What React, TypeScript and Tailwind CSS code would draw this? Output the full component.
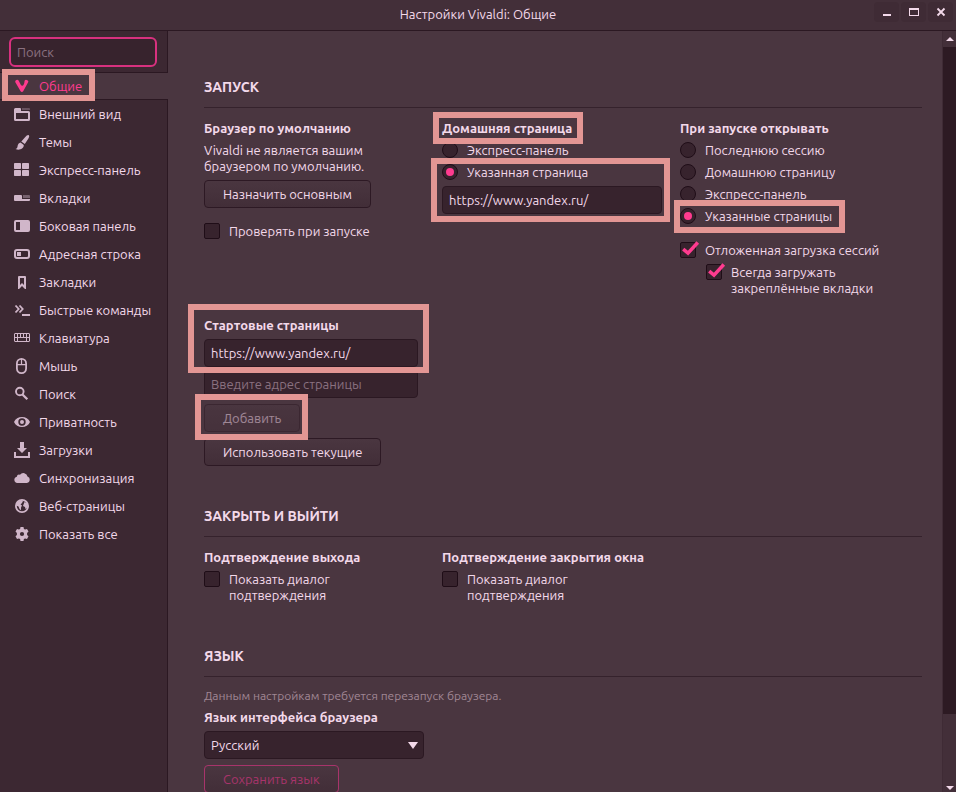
import type { ReactNode } from "react";

type NavItem = { label: string; icon: ReactNode; active?: boolean };

const NAV: NavItem[] = [
  {
    label: "Общие",
    active: true,
    icon: (
      <path d="M1.200 4A1.900 1.900 0 0 1 4.600 2.600l2.300 4.300c.6 1.100 2.200 1 2.700-.1l.6-1.500c.2-.6.2-1 .2-1.600a1.900 1.900 0 1 1 3.600.9L9.200 13.200c-.6 1.100-2 1.100-2.600 0Z" />
    ),
  },
  {
    label: "Внешний вид",
    icon: (
      <>
        <path fillRule="evenodd" d="M1.500 2H6a1 1 0 0 1 1 1v2h7.500A1.500 1.500 0 0 1 16 6.500v7a1.500 1.500 0 0 1-1.500 1.500h-13A1.500 1.500 0 0 1 0 13.500v-10A1.500 1.500 0 0 1 1.500 2ZM2 7v6h12V7Z" />
        <path opacity=".3" d="M8 2h7a1 1 0 0 1 1 1v1H8Z" />
      </>
    ),
  },
  {
    label: "Темы",
    icon: (
      <>
        <path d="M14.800 1.200c.8.700.3 2-.4 3.300L10.800 10 7.300 7.600 11.300 3c1.200-1.400 2.700-2.500 3.500-1.800Z" />
        <path d="M6.500 8.500 9.800 11c.1 2.300-1.700 4.300-4.300 4.600-1.300.1-2.800 0-4-.5 2-.6 1.800-2.100 2.200-3.700.4-1.400 1.400-2.600 2.800-2.900Z" />
      </>
    ),
  },
  {
    label: "Экспресс-панель",
    icon: (
      <>
        <rect y="1" width="7" height="6" rx=".7" />
        <rect x="8" y="1" width="7" height="6" rx=".7" />
        <rect y="8" width="7" height="6" rx=".7" />
        <rect x="8" y="8" width="7" height="6" rx=".7" />
      </>
    ),
  },
  {
    label: "Вкладки",
    icon: (
      <>
        <path d="M1 5h6a1 1 0 0 1 1 1v3h8v1a1 1 0 0 1-1 1H1a1 1 0 0 1-1-1V6a1 1 0 0 1 1-1Z" />
        <path opacity=".4" d="M9 5h6a1 1 0 0 1 1 1v2H9Z" />
      </>
    ),
  },
  {
    label: "Боковая панель",
    icon: <path fillRule="evenodd" d="M2 2h12a2 2 0 0 1 2 2v8a2 2 0 0 1-2 2H2a2 2 0 0 1-2-2V4a2 2 0 0 1 2-2Zm0 2v8h4V4Z" />,
  },
  {
    label: "Адресная строка",
    icon: (
      <>
        <rect x="1" y="4" width="14" height="8" rx="2" fill="none" stroke="currentColor" strokeWidth="2" />
        <rect x="3" y="6" width="4" height="4" />
      </>
    ),
  },
  {
    label: "Закладки",
    icon: <path fillRule="evenodd" d="M5 2h6a1 1 0 0 1 1 1v12h-1l-3-3-3 3H4V3a1 1 0 0 1 1-1Zm1 2v7l2-2 2 2V4Z" />,
  },
  {
    label: "Быстрые команды",
    icon: (
      <>
        <path fill="none" stroke="currentColor" strokeWidth="1.800" d="m1.500 3.500 3.200 3.500-3.200 3.500M5.500 3.500 8.700 7l-3.200 3.500" />
        <rect x="8" y="12" width="8" height="2" />
      </>
    ),
  },
  {
    label: "Клавиатура",
    icon: (
      <>
        <rect x=".5" y="3.500" width="15" height="8" rx=".5" fill="none" stroke="currentColor" />
        <path d="M1 7h14v1H1ZM3 4h1v3H3ZM6 4h1v3H6ZM9 4h1v3H9ZM12 4h1v3h-1ZM3 8h1v3H3ZM12 8h1v3h-1Z" />
      </>
    ),
  },
  {
    label: "Мышь",
    icon: (
      <g fill="none" stroke="currentColor" strokeWidth="1.800">
        <rect x="2.900" y=".9" width="9.200" height="14.200" rx="4.600" />
        <path strokeWidth="1.200" d="M3 6.600h9M7.500 1v5.600" />
      </g>
    ),
  },
  {
    label: "Поиск",
    icon: (
      <g fill="none" stroke="currentColor">
        <circle cx="5.800" cy="5.500" r="3.800" strokeWidth="1.900" />
        <path strokeWidth="2.300" d="m8.500 8.500 4.800 4.800" />
      </g>
    ),
  },
  {
    label: "Приватность",
    icon: (
      <path fillRule="evenodd" d="M8 3c3.600 0 6.500 1.800 8 5-1.500 3.200-4.400 5-8 5s-6.500-1.800-8-5c1.500-3.200 4.400-5 8-5Zm0 1.300a3.700 3.700 0 1 0 0 7.400 3.700 3.700 0 0 0 0-7.400Zm0 1.700a2 2 0 1 1 0 4 2 2 0 0 1 0-4Z" />
    ),
  },
  {
    label: "Загрузки",
    icon: <path d="M6 0h4v6h3L8 11 3 6h3ZM0 10h2v4h12v-4h2v6H0Z" />,
  },
  {
    label: "Синхронизация",
    icon: <path d="M3.300 13a3.200 3.200 0 0 1-.5-6.300 2.500 2.500 0 0 1 3.200-2A4.200 4.200 0 0 1 13.500 6.600 3.300 3.300 0 0 1 13 13Z" />,
  },
  {
    label: "Веб-страницы",
    icon: (
      <>
        <circle cx="8" cy="8" r="6.100" fill="none" stroke="currentColor" strokeWidth="1.800" />
        <path d="M3 4.500 7 2l2 1-1 2-1.500 1.500 1.500 1L7 9.500v2.800L5.500 11 4.500 8.500 2 7.500Z" />
        <path d="M10.500 4 13 5l1 3-1.500 2.500-1 .5-.5-2-2-1L9.500 6.500Z" />
      </>
    ),
  },
  {
    label: "Показать все",
    icon: (
      <path fillRule="evenodd" d="M6.500 1h3l.4 1.900 1.200.6 1.900-.6 1.500 2.600L13.100 7v1.900l1.400 1.400-1.500 2.600-1.900-.5-1.200.7L9.500 15h-3l-.4-1.900-1.200-.7-1.900.5-1.500-2.600L2.900 9V7L1.500 5.500 3 2.900l1.900.6 1.200-.6ZM8 5.900a2.100 2.100 0 1 0 0 4.200 2.100 2.100 0 0 0 0-4.200Z" />
    ),
  },
];

/* Marker frame drawn over the element it is placed in. */
function Marker({ className }: { className: string }) {
  return <span aria-hidden="true" className={`pointer-events-none absolute z-10 border-6 border-[#e39694] ${className}`} />;
}

function Section({ title, children }: { title: string; children: ReactNode }) {
  return (
    <section>
      <h2 className="border-b border-[#35222c] pb-3 text-sm leading-4 font-bold uppercase">{title}</h2>
      <div className="pt-3">{children}</div>
    </section>
  );
}

function Columns({ children }: { children: ReactNode }) {
  return <div className="grid grid-cols-[repeat(auto-fill,220px)] gap-x-[18px] gap-y-[18px]">{children}</div>;
}

function GroupTitle({ children }: { children: ReactNode }) {
  return <h3 className="font-bold whitespace-nowrap">{children}</h3>;
}

function Radio({ name, label, checked, marker }: { name: string; label: string; checked?: boolean; marker?: string }) {
  return (
    <label className="relative flex gap-[9px]">
      <span className="relative flex size-4 shrink-0 items-center justify-center">
        <input
          type="radio"
          name={name}
          defaultChecked={checked}
          className="peer size-4 appearance-none rounded-full border border-[#1f0d17] bg-[#37232d]"
        />
        <span className="absolute hidden size-2 rounded-full bg-[#ff3b8f] peer-checked:block" />
      </span>
      <span>{label}</span>
      {marker && <Marker className={marker} />}
    </label>
  );
}

function Check({ label, checked }: { label: string; checked?: boolean }) {
  return (
    <label className="flex gap-[9px]">
      <span className="relative size-4 shrink-0">
        <input
          type="checkbox"
          defaultChecked={checked}
          className="peer block size-4 appearance-none rounded-xs border border-[#1f0d17] bg-[#37232d]"
        />
        <svg viewBox="0 0 18 16" className="absolute -top-px left-0.5 hidden h-4 w-[18px] peer-checked:block" fill="none" stroke="#ff3b8f" strokeWidth="3.500">
          <path d="m1.200 8.200 4.800 4L15.800 1.500" />
        </svg>
      </span>
      <span>{label}</span>
    </label>
  );
}

function PushButton({ children, disabled, accent }: { children: ReactNode; disabled?: boolean; accent?: boolean }) {
  const tone = accent ? "border-[#a8346b] text-[#a8346b]" : "border-[#2d1924] text-[#f3d9ea]";
  return (
    <button
      type="button"
      disabled={disabled}
      className={`h-7 rounded border bg-linear-to-b from-[#4a3640] to-[#422e38] px-[18px] whitespace-nowrap ${tone} ${disabled ? "opacity-50" : ""}`}
    >
      {children}
    </button>
  );
}

const FIELD = "block h-7 w-full rounded border border-[#2b1822] bg-[#37232d] px-1.5 text-[#f3d9ea] placeholder:text-[#8a7180] outline-none";

function TitleBar() {
  const button = "flex h-5 w-[25px] items-center justify-center rounded bg-[#3f2b35]";
  return (
    <header className="relative flex h-[31px] shrink-0 items-center justify-center border-b border-[#2b1822] bg-[#432f39] pb-0.5">
      <h1>Настройки Vivaldi: Общие</h1>
      <div className="absolute top-0.5 right-[3px] flex gap-0.5">
        <button type="button" aria-label="Свернуть" className={button}>
          <svg viewBox="0 0 12 12" className="size-3" fill="currentColor"><path d="M2 8h8v2H2Z" /></svg>
        </button>
        <button type="button" aria-label="Развернуть" className={button}>
          <svg viewBox="0 0 12 12" className="size-3" fill="currentColor"><path fillRule="evenodd" d="M1 2h10v8H1ZM2 4v5h8V4Z" /></svg>
        </button>
        <button type="button" aria-label="Закрыть" className={button}>
          <svg viewBox="0 0 12 12" className="size-3" fill="none" stroke="currentColor" strokeWidth="1.800"><path d="m2.500 2.500 7 7M9.500 2.500l-7 7" /></svg>
        </button>
      </div>
    </header>
  );
}

function Sidebar() {
  return (
    <aside className="flex w-[168px] shrink-0 flex-col">
      <div className="border-r border-[#2b1822] bg-[#3c2832] px-[9px] pt-1.5 pb-[5px]">
        <input
          type="search"
          aria-label="Поиск"
          placeholder="Поиск"
          className="block h-[30px] w-[148px] rounded-md border-2 border-[#d8317f] bg-[#37232d] px-1.5 text-[#f3d9ea] outline-none placeholder:text-[#8a7180]"
        />
      </div>
      <nav>
        {NAV.map((item) => (
          <a
            key={item.label}
            href="#"
            className={`relative flex h-7 items-center gap-[9px] pl-3.5 whitespace-nowrap ${
              item.active ? "border-y border-[#2b1822] text-[#ff3b8f]" : "border-r border-[#2b1822] bg-[#3c2832]"
            }`}
          >
            <svg viewBox="0 0 16 16" fill="currentColor" className={`size-4 shrink-0 ${item.active ? "" : "text-[#d0b6c9]"}`}>
              {item.icon}
            </svg>
            {item.label}
            {item.active && <Marker className="-top-1 left-0.5 h-8 w-[93px]" />}
          </a>
        ))}
      </nav>
      <div className="flex-1 border-r border-[#2b1822] bg-[#3c2832]" />
    </aside>
  );
}

function ScrollBar() {
  return (
    <div aria-hidden="true" className="flex w-3.5 shrink-0 flex-col border-l border-[#3f2b35] bg-[#432f39]">
      <div className="flex h-4 items-center justify-center">
        <svg viewBox="0 0 8 4" className="h-1 w-2" fill="#f3d9ea"><path d="m0 4 4-4 4 4Z" /></svg>
      </div>
      <div className="flex-[667] bg-[#2d1a23]" />
      <div className="flex-[72]" />
      <div className="flex h-1.5 items-start justify-center">
        <svg viewBox="0 0 8 4" className="h-1 w-2" fill="#f3d9ea"><path d="m0 0 4 4 4-4Z" /></svg>
      </div>
    </div>
  );
}

export default function App() {
  return (
    <div className="flex h-screen flex-col overflow-hidden bg-[#4a3640] font-['Ubuntu','Noto_Sans',sans-serif] text-[13px] leading-4 text-[#f3d9ea]">
      <TitleBar />
      <div className="flex min-h-0 flex-1">
        <Sidebar />
        <main className="min-w-0 flex-1 overflow-hidden pt-12 pr-5 pl-9">
          <div className="flex flex-col gap-[42px]">
            <Section title="Запуск">
              <Columns>
                <div className="flex flex-col items-start gap-1.5">
                  <GroupTitle>Браузер по умолчанию</GroupTitle>
                  <p>Vivaldi не является вашим браузером по умолчанию.</p>
                  <PushButton>Назначить основным</PushButton>
                  <div className="pt-[9px]">
                    <Check label="Проверять при запуске" />
                  </div>
                </div>
                <div className="flex flex-col gap-1.5">
                  <div className="relative">
                    <GroupTitle>Домашняя страница</GroupTitle>
                    <Marker className="-top-2 -left-[9px] h-8 w-[150px]" />
                  </div>
                  <Radio name="home" label="Экспресс-панель" />
                  <div className="relative flex flex-col gap-1.5">
                    <Radio name="home" label="Указанная страница" checked />
                    <input type="text" aria-label="Домашняя страница" defaultValue="https://www.yandex.ru/" className={FIELD} />
                    <Marker className="-top-1.5 -right-2 -bottom-2 -left-[11px]" />
                  </div>
                </div>
                <div className="flex flex-col gap-1.5">
                  <GroupTitle>При запуске открывать</GroupTitle>
                  <Radio name="startup" label="Последнюю сессию" />
                  <Radio name="startup" label="Домашнюю страницу" />
                  <Radio name="startup" label="Экспресс-панель" />
                  <Radio name="startup" label="Указанные страницы" checked marker="-top-2 -left-1.5 h-[33px] w-[171px]" />
                  <div className="flex flex-col gap-1.5 pt-3 pb-[3px]">
                    <Check label="Отложенная загрузка сессий" checked />
                    <div className="pl-[26px]">
                      <Check label="Всегда загружать закреплённые вкладки" checked />
                    </div>
                  </div>
                </div>
                <div className="flex flex-col items-start gap-1.5">
                  <div className="relative flex w-full flex-col gap-1.5">
                    <GroupTitle>Стартовые страницы</GroupTitle>
                    <div className="flex w-[214px] flex-col gap-[3px]">
                      <input type="text" aria-label="Стартовая страница" defaultValue="https://www.yandex.ru/" className={FIELD} />
                      <input type="text" aria-label="Новая стартовая страница" placeholder="Введите адрес страницы" className={FIELD} />
                    </div>
                    <Marker className="-top-[13px] -left-4 h-[69px] w-[241px]" />
                  </div>
                  <div className="relative">
                    <PushButton disabled>Добавить</PushButton>
                    <Marker className="-top-[10px] -left-[9px] h-[46px] w-[113px]" />
                  </div>
                  <PushButton>Использовать текущие</PushButton>
                </div>
              </Columns>
            </Section>

            <Section title="Закрыть и выйти">
              <Columns>
                <div className="flex flex-col gap-1.5 pb-[3px]">
                  <GroupTitle>Подтверждение выхода</GroupTitle>
                  <Check label="Показать диалог подтверждения" />
                </div>
                <div className="flex flex-col gap-1.5 pb-[3px]">
                  <GroupTitle>Подтверждение закрытия окна</GroupTitle>
                  <Check label="Показать диалог подтверждения" />
                </div>
              </Columns>
            </Section>

            <Section title="Язык">
              <div className="flex flex-col items-start gap-1.5">
                <p className="text-xs leading-3.5 text-[#a08694]">Данным настройкам требуется перезапуск браузера.</p>
                <GroupTitle>
                  <label htmlFor="language">Язык интерфейса браузера</label>
                </GroupTitle>
                <div className="relative w-[220px]">
                  <select id="language" className={`appearance-none ${FIELD}`}>
                    <option>Русский</option>
                  </select>
                  <svg viewBox="0 0 10 7" className="pointer-events-none absolute top-[11px] right-1.5 h-[7px] w-[10px]" fill="#f3d9ea">
                    <path d="M0 0h10L5 7Z" />
                  </svg>
                </div>
                <PushButton accent>Сохранить язык</PushButton>
              </div>
            </Section>
          </div>
        </main>
        <ScrollBar />
      </div>
    </div>
  );
}
